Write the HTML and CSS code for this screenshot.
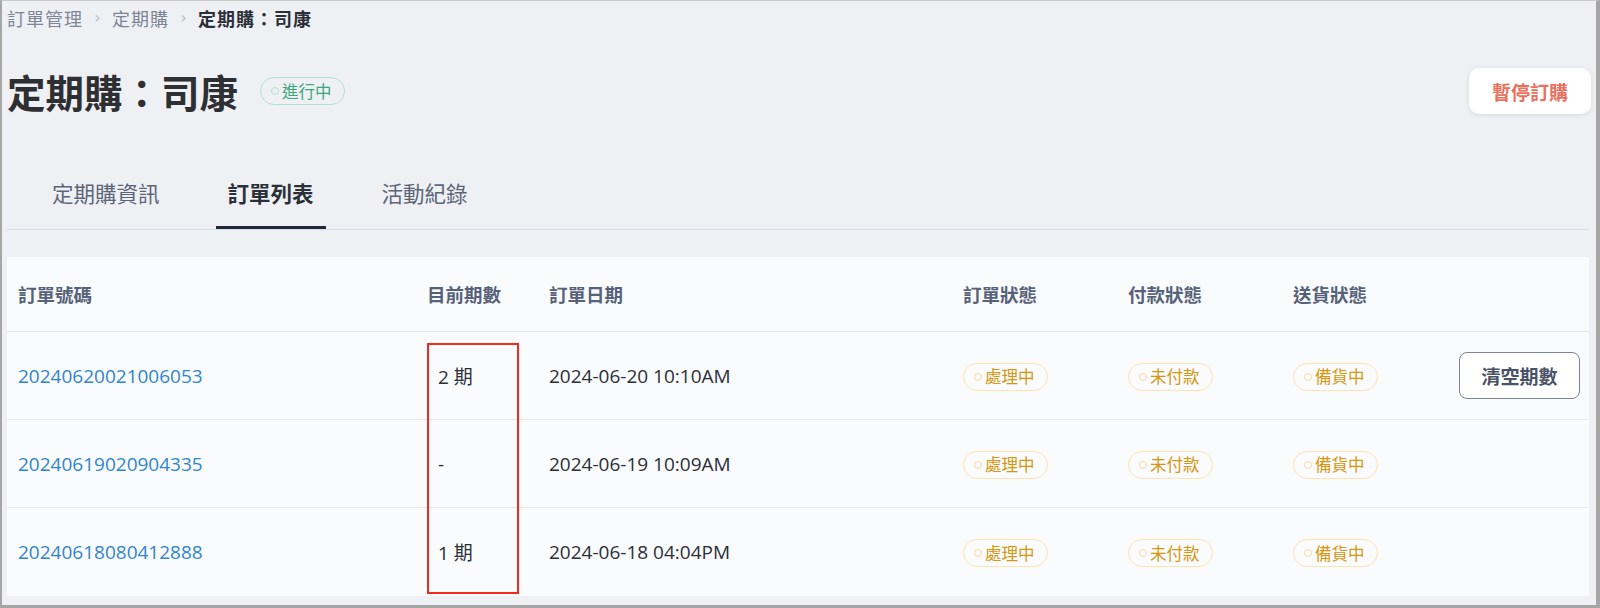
FILE: index.html
```html
<!DOCTYPE html>
<html lang="zh-Hant">
<head>
<meta charset="utf-8">
<title>定期購：司康</title>
<link rel="stylesheet" href="styles.css">
</head>
<body>
<div class="frame">
  <nav class="crumbs">
    <span class="crumb">訂單管理</span>
    <span class="sep">›</span>
    <span class="crumb">定期購</span>
    <span class="sep">›</span>
    <span class="crumb current">定期購：司康</span>
  </nav>

  <header class="head">
    <div class="head-left">
      <h1 class="title">定期購：司康</h1>
      <span class="pill pill-green"><i class="dot"></i>進行中</span>
    </div>
    <button class="btn-pause">暫停訂購</button>
  </header>

  <div class="tabs">
    <div class="tab">定期購資訊</div>
    <div class="tab active">訂單列表</div>
    <div class="tab">活動紀錄</div>
  </div>

  <section class="card">
    <div class="row row-head">
      <div class="cell">訂單號碼</div>
      <div class="cell">目前期數</div>
      <div class="cell">訂單日期</div>
      <div class="cell">訂單狀態</div>
      <div class="cell">付款狀態</div>
      <div class="cell">送貨狀態</div>
      <div class="cell"></div>
    </div>
    <div class="row">
      <div class="cell"><a class="link">20240620021006053</a></div>
      <div class="cell num period">2 期</div>
      <div class="cell num">2024-06-20 10:10AM</div>
      <div class="cell"><span class="pill pill-orange"><i class="dot"></i>處理中</span></div>
      <div class="cell"><span class="pill pill-orange"><i class="dot"></i>未付款</span></div>
      <div class="cell"><span class="pill pill-orange"><i class="dot"></i>備貨中</span></div>
      <div class="cell"><button class="btn-clear">清空期數</button></div>
    </div>
    <div class="row">
      <div class="cell"><a class="link">20240619020904335</a></div>
      <div class="cell num period">-</div>
      <div class="cell num">2024-06-19 10:09AM</div>
      <div class="cell"><span class="pill pill-orange"><i class="dot"></i>處理中</span></div>
      <div class="cell"><span class="pill pill-orange"><i class="dot"></i>未付款</span></div>
      <div class="cell"><span class="pill pill-orange"><i class="dot"></i>備貨中</span></div>
      <div class="cell"></div>
    </div>
    <div class="row last">
      <div class="cell"><a class="link">20240618080412888</a></div>
      <div class="cell num period">1 期</div>
      <div class="cell num">2024-06-18 04:04PM</div>
      <div class="cell"><span class="pill pill-orange"><i class="dot"></i>處理中</span></div>
      <div class="cell"><span class="pill pill-orange"><i class="dot"></i>未付款</span></div>
      <div class="cell"><span class="pill pill-orange"><i class="dot"></i>備貨中</span></div>
      <div class="cell"></div>
    </div>
    <div class="highlight"></div>
  </section>
</div>
</body>
</html>
```

FILE: styles.css
```css
* { box-sizing: border-box; }
html, body {
  margin: 0;
  padding: 0;
  width: 1600px;
  height: 608px;
  overflow: hidden;
  background: #ffffff;
}
body {
  font-family: "Open Sans", "Noto Sans CJK TC", "Noto Sans", sans-serif;
  color: #2b2f38;
}
.frame {
  width: 1600px;
  height: 608px;
  background: #eef0f3;
  border-top: 1px solid #c9c9c9;
  border-left: 2px solid #a6a6a6;
  border-right: 4px solid #a6a6a6;
  border-bottom: 3px solid #a6a6a6;
  padding: 0 7px 9px 5px;
  display: flex;
  flex-direction: column;
}

/* breadcrumb */
.crumbs {
  height: 33px;
  display: flex;
  align-items: center;
  font-family: "Noto Sans CJK TC", sans-serif;
  font-size: 18px;
  letter-spacing: 1px;
}
.crumb { color: #7d8597; }
.crumb.current { color: #2b2f38; font-weight: 700; }
.sep {
  color: #b8bec9;
  font-family: "DejaVu Sans", sans-serif;
  font-size: 16px;
  width: 29px;
  text-align: center;
  letter-spacing: 0;
}

/* header */
.head {
  margin-top: 34px;
  height: 46px;
  display: flex;
  align-items: center;
  justify-content: space-between;
}
.head-left {
  display: flex;
  align-items: center;
  gap: 22px;
}
.title {
  margin: 0;
  font-family: "Noto Sans CJK TC", sans-serif;
  font-size: 38.5px;
  font-weight: 700;
  color: #2e2f33;
  line-height: 46px;
}
.btn-pause {
  width: 122px;
  height: 46px;
  margin-right: -2px;
  border: none;
  border-radius: 10px;
  background: #ffffff;
  box-shadow: 0 1px 4px rgba(40, 50, 70, 0.12);
  color: #e8705d;
  font-family: "Noto Sans CJK TC", sans-serif;
  font-size: 19px;
  font-weight: 700;
}

/* pills */
.pill {
  display: inline-flex;
  align-items: center;
  height: 28px;
  padding: 0 12px 0 10px;
  border-radius: 14px;
  font-family: "Noto Sans CJK TC", sans-serif;
  font-size: 16.5px;
  line-height: 1;
  background: transparent;
}
.pill .dot {
  width: 8px;
  height: 8px;
  border-radius: 50%;
  margin-right: 3px;
  flex: none;
}
.pill-green {
  border: 1.5px solid #aee3cc;
  color: #3aa87c;
}
.pill-green .dot { border: 1.5px solid #aee3cc; }
.pill-orange {
  border: 1.5px solid #fde3b0;
  color: #d6960f;
}
.pill-orange .dot { border: 1.5px solid #f8d9a0; }

/* tabs */
.tabs {
  margin-top: 40px;
  display: flex;
  gap: 44px;
  padding-left: 33px;
  border-bottom: 1px solid #d7dde7;
}
.tab {
  padding: 6px 12px 0;
  height: 75px;
  line-height: 66px;
  border-bottom: 3px solid transparent;
  font-family: "Noto Sans CJK TC", sans-serif;
  font-size: 21.5px;
  color: #5d6679;
}
.tab.active {
  color: #2b2f38;
  font-weight: 700;
  border-bottom-color: #1f2a3d;
}

/* card / table */
.card {
  position: relative;
  margin-top: 27px;
  background: #fafbfc;
  flex: 1;
}
.row {
  display: grid;
  grid-template-columns: 409px 122px 414px 165px 165px 166px 1fr;
  padding-left: 11px;
  height: 88px;
  border-bottom: 1px solid #e3e8ef;
  align-items: center;
}
.row.last { border-bottom: none; }
.row-head {
  height: 75px;
  border-bottom: 1px solid #dde3ec;
}
.row-head .cell {
  font-family: "Noto Sans CJK TC", sans-serif;
  font-size: 18.5px;
  font-weight: 700;
  color: #56617a;
}
.cell {
  font-size: 19px;
  color: #2b2f38;
}
.num {
  font-family: "Open Sans", "Noto Sans CJK TC", sans-serif;
}
.period { padding-left: 11px; }
.link {
  color: #2f86cf;
  font-family: "Open Sans", sans-serif;
  font-size: 19px;
}
.btn-clear {
  width: 121px;
  height: 47px;
  border: 1.5px solid #7a8397;
  border-radius: 8px;
  background: #ffffff;
  color: #4a5366;
  font-family: "Noto Sans CJK TC", sans-serif;
  font-size: 19px;
  font-weight: 700;
}

/* annotation box */
.highlight {
  position: absolute;
  left: 420px;
  top: 86px;
  width: 92px;
  height: 251px;
  border: 2.5px solid #f2291c;
  pointer-events: none;
}
```
